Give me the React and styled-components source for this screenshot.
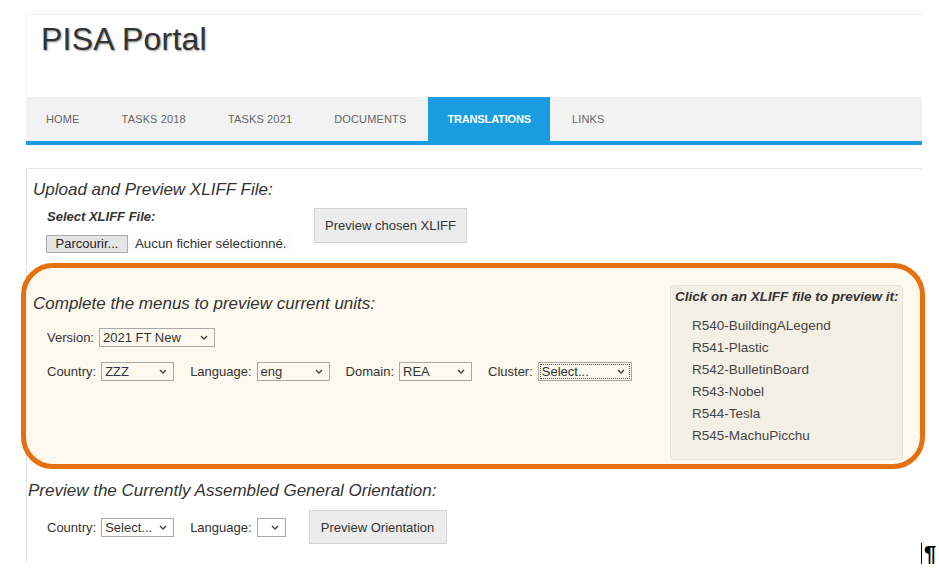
import styled, { createGlobalStyle } from "styled-components"

const GlobalStyle = createGlobalStyle`
  body {
    margin: 0;
    background: #fff;
    font-family: "Liberation Sans", Arial, sans-serif;
    color: #333;
  }
`

const Page = styled.div`
  position: relative;
  width: 896px;
  height: 562px;
  padding: 14px 0 0 26px;
`

const Header = styled.header`
  box-sizing: border-box;
  height: 83px;
  padding: 8px 0 0 14px;
  border-top: 1px solid #ececec;
  border-left: 1px solid #f0f0f0;
`

const Title = styled.h1`
  margin: 0;
  font-size: 32px;
  line-height: 32px;
  font-weight: normal;
  letter-spacing: 0.2px;
  color: #333;
  text-shadow: 1px 1px 2px rgba(0, 0, 0, 0.4);
`

const Nav = styled.nav`
  display: flex;
  height: 44px;
  background: #f2f2f2;
  border-bottom: 4px solid #1a9de0;
`

const Tab = styled.a`
  padding: 0 ${(p) => (p.$active ? 19 : 20)}px;
  margin-right: 2px;
  line-height: 44px;
  font-size: 11px;
  text-transform: uppercase;
  letter-spacing: ${(p) => (p.$active ? -0.15 : 0.15)}px;
  color: ${(p) => (p.$active ? "#fff" : "#666")};
  font-weight: ${(p) => (p.$active ? "bold" : "normal")};
  background: ${(p) => (p.$active ? "#1a9de0" : "transparent")};
`

const Panel = styled.main`
  box-sizing: border-box;
  height: 394px;
  margin-top: 23px;
  border-top: 1px solid #e6e6e6;
  border-left: 1px solid #e6e6e6;
`

const Heading = styled.h2`
  margin: 0;
  font-size: 17px;
  line-height: 19px;
  font-style: italic;
  font-weight: normal;
  color: #333;
`

const Upload = styled.section`
  padding: 11px 0 0 6px;
`

const UploadRow = styled.div`
  display: flex;
  align-items: flex-start;
  margin-top: 9px;
  padding-left: 13px;
`

const FieldLabel = styled.div`
  margin: 1px 0 0 1px;
  font-size: 13px;
  line-height: 16px;
  font-weight: bold;
  font-style: italic;
`

const FileField = styled.div`
  display: flex;
  align-items: center;
  width: 248px;
  height: 21px;
  margin-top: 8px;
  font-size: 13.3px;
  background: #fdfdfd;
`

const BrowseButton = styled.button`
  box-sizing: border-box;
  width: 82px;
  height: 18px;
  margin-right: 7px;
  padding: 0;
  font: 13px "Liberation Sans", Arial, sans-serif;
  color: #222;
  background: #e5e5e5;
  border: 1px solid #adadad;
`

const Button = styled.button`
  box-sizing: border-box;
  width: ${(p) => p.$width}px;
  height: ${(p) => p.$height}px;
  margin-left: ${(p) => p.$offset}px;
  padding: 0;
  font: 13px "Liberation Sans", Arial, sans-serif;
  color: #333;
  background: #ececec;
  border: 1px solid #d3d3d3;
`

const Highlight = styled.section`
  box-sizing: border-box;
  display: flex;
  justify-content: space-between;
  align-items: flex-start;
  height: 206px;
  margin: 9px -3px 0 -6px;
  padding: 17px 17px 4px 7px;
  background: #fdf9ef;
  border: 5px solid #e5700f;
  border-radius: 32px;
`

const Menus = styled.div`
  padding-top: 9px;
`

const Row = styled.div`
  display: flex;
  align-items: center;
  gap: 16px;
  height: ${(p) => p.$height || 19}px;
  margin-top: ${(p) => p.$top}px;
  padding-left: ${(p) => p.$indent}px;
`

const Field = styled.label`
  display: flex;
  align-items: center;
  gap: 5px;
  font-size: 13px;
  color: #333;
`

const SelectWrap = styled.span`
  position: relative;
  display: inline-flex;
  width: ${(p) => p.$width}px;
`

const Select = styled.select`
  box-sizing: border-box;
  width: 100%;
  height: 19px;
  padding: 0 0 0 3px;
  appearance: none;
  font: 13px "Liberation Sans", Arial, sans-serif;
  color: #333;
  background: transparent;
  border: 1px solid #a9a9a9;
  border-radius: 0;
  outline: ${(p) => (p.$focused ? "1px dotted #555" : "none")};
  outline-offset: -3px;
`

const Chevron = styled.svg`
  position: absolute;
  right: 7px;
  top: 7px;
  pointer-events: none;
`

const FileList = styled.aside`
  box-sizing: border-box;
  width: 233px;
  height: 175px;
  padding: 3px 4px;
  background: #f4f0e6;
  border: 1px solid #e9e3d6;
  border-radius: 4px;
`

const ListTitle = styled.div`
  font-size: 13.5px;
  line-height: 16px;
  font-weight: bold;
  font-style: italic;
  color: #333;
  white-space: nowrap;
`

const Files = styled.ul`
  margin: 10px 0 0;
  padding: 0 0 0 17px;
  list-style: none;
`

const FileItem = styled.li`
  font-size: 13.5px;
  line-height: 22px;
  color: #444;
`

const Orientation = styled.section`
  padding: 12px 0 0 1px;
`

const Pilcrow = styled.span`
  position: absolute;
  left: 921px;
  top: 543px;
  padding-left: 2px;
  border-left: 1px solid #000;
  font-size: 22px;
  line-height: 21px;
  font-weight: bold;
  color: #000;
`

function Dropdown({ width, value, focused }) {
  return (
    <SelectWrap $width={width}>
      <Select $focused={focused} defaultValue={value}>
        <option value={value}>{value}</option>
      </Select>
      <Chevron width="8" height="5" viewBox="0 0 8 5">
        <path d="M1 1l3 3 3-3" fill="none" stroke="#444" strokeWidth="1.4" />
      </Chevron>
    </SelectWrap>
  )
}

const tabs = ["Home", "Tasks 2018", "Tasks 2021", "Documents", "Translations", "Links"]
const files = [
  "R540-BuildingALegend",
  "R541-Plastic",
  "R542-BulletinBoard",
  "R543-Nobel",
  "R544-Tesla",
  "R545-MachuPicchu",
]

export default function App() {
  return (
    <Page>
      <GlobalStyle />
      <Header>
        <Title>PISA Portal</Title>
      </Header>
      <Nav>
        {tabs.map((t) => (
          <Tab key={t} $active={t === "Translations"}>{t}</Tab>
        ))}
      </Nav>

      <Panel>
        <Upload>
          <Heading>Upload and Preview XLIFF File:</Heading>
          <UploadRow>
            <div>
              <FieldLabel>Select XLIFF File:</FieldLabel>
              <FileField>
                <BrowseButton>Parcourir...</BrowseButton>
                Aucun fichier sélectionné.
              </FileField>
            </div>
            <Button $width={153} $height={35} $offset={20}>Preview chosen XLIFF</Button>
          </UploadRow>
        </Upload>

        <Highlight>
          <Menus>
            <Heading>Complete the menus to preview current units:</Heading>
            <Row $top={15} $indent={14}>
              <Field>Version: <Dropdown width={116} value="2021 FT New" /></Field>
            </Row>
            <Row $top={15} $indent={14}>
              <Field>Country: <Dropdown width={73} value="ZZZ" /></Field>
              <Field>Language: <Dropdown width={73} value="eng" /></Field>
              <Field>Domain: <Dropdown width={73} value="REA" /></Field>
              <Field>Cluster: <Dropdown width={94} value="Select..." focused /></Field>
            </Row>
          </Menus>
          <FileList>
            <ListTitle>Click on an XLIFF file to preview it:</ListTitle>
            <Files>
              {files.map((f) => (
                <FileItem key={f}>{f}</FileItem>
              ))}
            </Files>
          </FileList>
        </Highlight>

        <Orientation>
          <Heading>Preview the Currently Assembled General Orientation:</Heading>
          <Row $top={10} $indent={19} $height={34}>
            <Field>Country: <Dropdown width={73} value="Select..." /></Field>
            <Field>Language: <Dropdown width={29} value="" /></Field>
            <Button $width={138} $height={34} $offset={7}>Preview Orientation</Button>
          </Row>
        </Orientation>
      </Panel>

      <Pilcrow>¶</Pilcrow>
    </Page>
  )
}
